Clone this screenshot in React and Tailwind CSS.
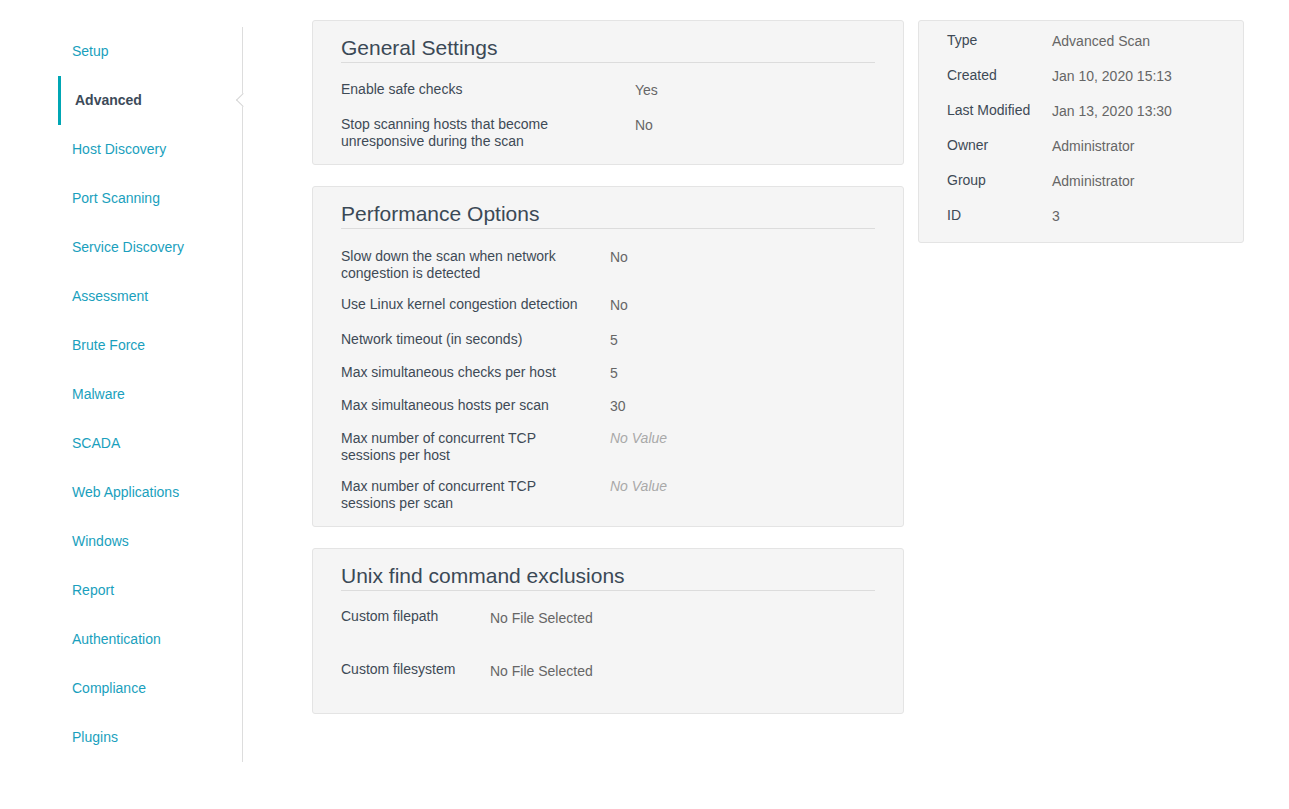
import React from "react";

const nav = [
  "Setup",
  "Advanced",
  "Host Discovery",
  "Port Scanning",
  "Service Discovery",
  "Assessment",
  "Brute Force",
  "Malware",
  "SCADA",
  "Web Applications",
  "Windows",
  "Report",
  "Authentication",
  "Compliance",
  "Plugins",
];

function Card({ title, children, className = "" }) {
  return (
    <div className={"rounded-[3px] border border-[#e4e4e4] bg-[#f5f5f5] px-[28px] " + className}>
      <div className="border-b border-[#dcdcdc] pb-[2px] pt-[15px] text-[21px] leading-[24px] text-[#3b4956]">
        {title}
      </div>
      {children}
    </div>
  );
}

function Row({ label, value, valueX, labelW = "w-[240px]", mb, muted }) {
  return (
    <div className={"flex text-[14px] leading-[17px] " + mb}>
      <div className={"shrink-0 " + valueX}>
        <div className={"text-[#3e4a56] " + labelW}>{label}</div>
      </div>
      <div className={muted ? "italic text-[#a9a9a9]" : "pt-[1px] text-[#666]"}>{value}</div>
    </div>
  );
}

export default function App() {
  const perf = [
    ["Slow down the scan when network congestion is detected", "No", "mb-[14px]"],
    ["Use Linux kernel congestion detection", "No", "mb-[17px]"],
    ["Network timeout (in seconds)", "5", "mb-[15px]"],
    ["Max simultaneous checks per host", "5", "mb-[15px]"],
    ["Max simultaneous hosts per scan", "30", "mb-[15px]"],
    ["Max number of concurrent TCP sessions per host", "No Value", "mb-[14px]", true],
    ["Max number of concurrent TCP sessions per scan", "No Value", "mb-[14px]", true],
  ];
  const info = [
    ["Type", "Advanced Scan"],
    ["Created", "Jan 10, 2020 15:13"],
    ["Last Modified", "Jan 13, 2020 13:30"],
    ["Owner", "Administrator"],
    ["Group", "Administrator"],
    ["ID", "3"],
  ];
  return (
    <div
      className="flex min-h-[809px] w-[1289px] bg-white"
      style={{ fontFamily: '"Liberation Sans", Arial, sans-serif' }}
    >
      <div className="ml-[58px] mt-[27px] h-[735px] w-[185px] shrink-0 border-r border-[#dddddd]">
        {nav.map((n) =>
          n === "Advanced" ? (
            <div key={n} className="relative flex h-[49px] items-center border-l-[3px] border-[#00a6b4] pl-[14px] text-[14px] font-bold text-[#3c4a59]">
              {n}
              <div className="absolute right-[-6px] top-[19px] h-[10px] w-[10px] rotate-45 border-b border-l border-[#d6d6d6] bg-white" />
            </div>
          ) : (
            <div key={n} className="flex h-[49px] items-center pl-[14px] text-[14px] text-[#1a9fbd]">
              {n}
            </div>
          )
        )}
      </div>

      <div className="ml-[69px] mt-[20px] flex w-[592px] shrink-0 flex-col gap-[21px]">
        <Card title="General Settings" className="pb-[14px]">
          <div className="pt-[18px]">
            <Row label="Enable safe checks" value="Yes" valueX="w-[294px]" labelW="w-[240px]" mb="mb-[17px]" />
            <Row label="Stop scanning hosts that become unresponsive during the scan" value="No" valueX="w-[294px]" labelW="w-[240px]" mb="" />
          </div>
        </Card>

        <Card title="Performance Options">
          <div className="pt-[19px]">
            {perf.map(([l, v, mb, m]) => (
              <Row key={l} label={l} value={v} valueX="w-[269px]" labelW="w-[240px]" mb={mb} muted={m} />
            ))}
          </div>
        </Card>

        <Card title="Unix find command exclusions">
          <div className="pt-[17px]">
            <div className="flex h-[53px] text-[14px] leading-[17px]">
              <div className="w-[149px] shrink-0 text-[#3e4a56]">Custom filepath</div>
              <div className="pt-[2px] text-[#666]">No File Selected</div>
            </div>
            <div className="flex h-[52px] text-[14px] leading-[17px]">
              <div className="w-[149px] shrink-0 text-[#3e4a56]">Custom filesystem</div>
              <div className="pt-[2px] text-[#666]">No File Selected</div>
            </div>
          </div>
        </Card>
      </div>

      <div className="ml-[14px] mt-[20px] h-[223px] w-[326px] shrink-0 rounded-[3px] border border-[#e4e4e4] bg-[#f5f5f5] pl-[28px] pt-[11px]">
        {info.map(([l, v]) => (
          <div key={l} className="flex h-[35px] text-[14px] leading-[17px]">
            <div className="w-[105px] shrink-0 text-[#3e4a56]">{l}</div>
            <div className="pt-[1px] text-[#666]">{v}</div>
          </div>
        ))}
      </div>
    </div>
  );
}
